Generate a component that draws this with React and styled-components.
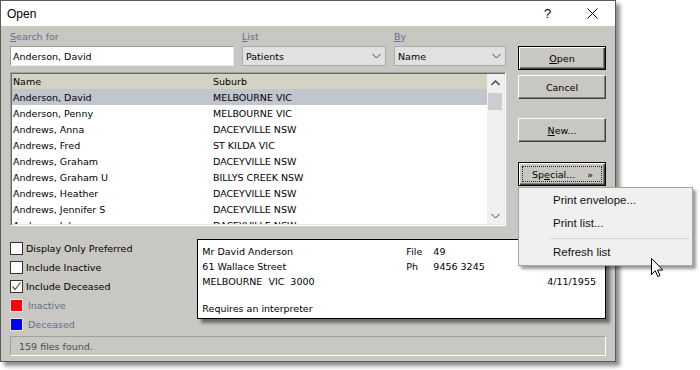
import React from 'react';
import styled, { createGlobalStyle } from 'styled-components';

const GlobalStyle = createGlobalStyle`
  html, body {
    margin: 0;
    padding: 0;
    background: #fff;
  }
  body {
    font-family: "DejaVu Sans", "Liberation Sans", sans-serif;
    font-size: 9.5px;
    color: #000;
  }
`;

const Stage = styled.div`
  position: relative;
  width: 700px;
  height: 370px;
  overflow: hidden;
`;

const Window = styled.div`
  width: 616px;
  height: 362px;
  box-sizing: border-box;
  border: 1px solid #5c5c5c;
  background: #c8c7c1;
  box-shadow: 4px 4px 4px rgba(0, 0, 0, 0.45);
  display: flex;
  flex-direction: column;
`;

const TitleBar = styled.div`
  height: 25px;
  background: #fff;
  display: flex;
  align-items: center;
  padding-left: 6px;
  font-family: "Liberation Sans", sans-serif;
  font-size: 12px;
  color: #000;
`;

const Title = styled.div`
  flex: 1;
`;

const CaptionButton = styled.div`
  width: 45px;
  height: 25px;
  display: flex;
  align-items: center;
  justify-content: center;
  font-family: "Liberation Sans", sans-serif;
  font-size: 13px;
`;

const Body = styled.div`
  flex: 1;
  display: flex;
  flex-direction: column;
  padding: 1px 9px 8px 9px;
`;

const TopSection = styled.div`
  display: flex;
  gap: 12px;
`;

const LeftPane = styled.div`
  width: 496px;
  display: flex;
  flex-direction: column;
`;

const FieldsRow = styled.div`
  display: grid;
  grid-template-columns: 224px 144px 112px;
  column-gap: 8px;
`;

const Field = styled.div`
  display: flex;
  flex-direction: column;
`;

const Label = styled.div`
  height: 19px;
  line-height: 19px;
  color: #66708f;
`;

const TextInput = styled.div`
  height: 20px;
  box-sizing: border-box;
  background: #fff;
  border: 1px solid;
  border-color: #9c9c9c #ececec #ececec #9c9c9c;
  padding-left: 2px;
  display: flex;
  align-items: center;
`;

const Select = styled.div`
  height: 20px;
  box-sizing: border-box;
  background: #e1e1e1;
  border: 1px solid #adadad;
  padding: 0 4px 0 3px;
  display: flex;
  align-items: center;
  justify-content: space-between;
`;

const Chevron = ({ up }) => (
  <svg width="9" height="6" viewBox="0 0 9 6">
    <polyline
      points={up ? '0.5,5 4.5,1 8.5,5' : '0.5,1 4.5,5 8.5,1'}
      fill="none"
      stroke={up ? '#555' : '#444'}
      strokeWidth={up ? 1.6 : 1}
    />
  </svg>
);

const ListBox = styled.div`
  margin-top: 6px;
  height: 154px;
  box-sizing: border-box;
  border: 1px solid;
  border-color: #a0a0a0 #fff #fff #a0a0a0;
  box-shadow: inset 1px 1px #696969, inset -1px -1px #e3e3e3;
  background: #fff;
  display: flex;
  padding: 1px;
`;

const ListArea = styled.div`
  flex: 1;
  overflow: hidden;
`;

const Columns = styled.div`
  display: grid;
  grid-template-columns: 200px 1fr;
  align-items: center;
  height: 16px;
  padding-left: 1px;
  white-space: nowrap;
`;

const HeaderRow = styled(Columns)`
  height: 15px;
  background: #d3d3c4;
`;

const Row = styled(Columns)`
  background: ${(p) => (p.$selected ? '#c1c5ce' : 'transparent')};
`;

const ScrollBar = styled.div`
  width: 17px;
  background: #f0f0f0;
  display: flex;
  flex-direction: column;
  align-items: center;
`;

const ScrollArrow = styled.div`
  height: 17px;
  width: 100%;
  display: flex;
  align-items: center;
  justify-content: center;
`;

const ScrollTrack = styled.div`
  flex: 1;
  width: 100%;
`;

const ScrollThumb = styled.div`
  margin: 2px 2px 0 1px;
  height: 17px;
  background: #cdcdcd;
`;

const RightPane = styled.div`
  width: 89px;
  padding-top: 19px;
  display: flex;
  flex-direction: column;
`;

const Button = styled.div`
  position: relative;
  height: 24px;
  box-sizing: border-box;
  margin-top: ${(p) => p.$gap || 0}px;
  background: #c8c7c1;
  border: 1px solid;
  border-color: ${(p) => (p.$default ? '#000' : '#fff #404040 #404040 #fff')};
  box-shadow: ${(p) =>
    p.$default
      ? 'inset 1px 1px #fff, inset -1px -1px #404040, inset -2px -2px #808080'
      : 'inset -1px -1px #808080'};
  display: flex;
  align-items: center;
  justify-content: center;
  color: #000;
`;

const FocusRect = styled.div`
  flex: 1;
  align-self: stretch;
  margin: 3px;
  border: 1px dotted #222;
  display: flex;
  align-items: center;
  justify-content: space-between;
  padding: 0 8px 0 9px;
`;

const Menu = styled.div`
  position: absolute;
  left: -1px;
  top: 24px;
  width: 175px;
  box-sizing: border-box;
  background: #f0f0f0;
  border: 1px solid #a5a5a5;
  box-shadow: 3px 3px 3px rgba(0, 0, 0, 0.4);
  padding: 1px 0 1px;
  font-family: "Liberation Sans", sans-serif;
  font-size: 11.5px;
  color: #111;
  z-index: 5;
`;

const MenuItem = styled.div`
  height: 23px;
  line-height: 23px;
  padding-left: 34px;
`;

const MenuSeparator = styled.div`
  height: 1px;
  background: #d7d7d7;
  margin: 3px 2px 2px 30px;
`;

const Cursor = styled.svg`
  position: absolute;
  left: 132px;
  top: 70px;
`;

const BottomSection = styled.div`
  display: flex;
  margin-top: 13px;
`;

const OptionList = styled.div`
  width: 188px;
  padding-top: 2px;
  display: flex;
  flex-direction: column;
`;

const Option = styled.div`
  height: 19px;
  display: flex;
  align-items: flex-start;
`;

const CheckBox = styled.div`
  width: 13px;
  height: 13px;
  margin-top: 1px;
  box-sizing: border-box;
  border: 1px solid #333;
  background: #fff;
  display: flex;
  align-items: center;
  justify-content: center;
`;

const Swatch = styled.div`
  width: 13px;
  height: 13px;
  margin-top: 1px;
  box-sizing: border-box;
  border: 1px solid #e8e8e8;
  background: ${(p) => p.$color};
`;

const OptionText = styled.span`
  line-height: 15px;
  margin-left: ${(p) => (p.$legend ? 5 : 3)}px;
  color: ${(p) => (p.$legend ? '#66708f' : '#000')};
`;

const InfoPanel = styled.div`
  width: 410px;
  height: 80px;
  box-sizing: border-box;
  background: #fff;
  border: 1px solid #000;
  box-shadow: 4px 4px 3px rgba(0, 0, 0, 0.45);
  padding: 4px 9px 0 4px;
  display: grid;
  grid-template-columns: 204px 27px 1fr auto;
  grid-template-rows: 15px 15px 15px 12px 15px;
  align-items: center;
  white-space: pre;
`;

const Spacer = styled.div`
  grid-column: 1 / -1;
`;

const FullLine = styled.div`
  grid-column: 1 / -1;
`;

const StatusBar = styled.div`
  margin-top: auto;
  height: 20px;
  box-sizing: border-box;
  border: 1px solid;
  border-color: #a0a0a0 #fff #fff #a0a0a0;
  padding-left: 8px;
  display: flex;
  align-items: center;
  color: #4a4a55;
`;

const patients = [
  ['Anderson, David', 'MELBOURNE VIC'],
  ['Anderson, Penny', 'MELBOURNE VIC'],
  ['Andrews, Anna', 'DACEYVILLE NSW'],
  ['Andrews, Fred', 'ST KILDA VIC'],
  ['Andrews, Graham', 'DACEYVILLE NSW'],
  ['Andrews, Graham U', 'BILLYS CREEK NSW'],
  ['Andrews, Heather', 'DACEYVILLE NSW'],
  ['Andrews, Jennifer S', 'DACEYVILLE NSW'],
  ['Andrews, John', 'DACEYVILLE NSW'],
];

const Check = () => (
  <svg width="11" height="11" viewBox="0 0 11 11">
    <polyline points="1.5,5.5 4,8.5 9.5,1.5" fill="none" stroke="#555" strokeWidth="1.2" />
  </svg>
);

const CloseGlyph = () => (
  <svg width="11" height="11" viewBox="0 0 11 11">
    <path d="M0.5 0.5 L10.5 10.5 M10.5 0.5 L0.5 10.5" stroke="#000" strokeWidth="1" />
  </svg>
);

export default function App() {
  return (
    <Stage>
      <GlobalStyle />
      <Window>
        <TitleBar>
          <Title>Open</Title>
          <CaptionButton>?</CaptionButton>
          <CaptionButton>
            <CloseGlyph />
          </CaptionButton>
        </TitleBar>
        <Body>
          <TopSection>
            <LeftPane>
              <FieldsRow>
                <Field>
                  <Label>
                    <u>S</u>earch for
                  </Label>
                  <TextInput>Anderson, David</TextInput>
                </Field>
                <Field>
                  <Label>
                    <u>L</u>ist
                  </Label>
                  <Select>
                    Patients
                    <Chevron />
                  </Select>
                </Field>
                <Field>
                  <Label>
                    <u>B</u>y
                  </Label>
                  <Select>
                    Name
                    <Chevron />
                  </Select>
                </Field>
              </FieldsRow>
              <ListBox>
                <ListArea>
                  <HeaderRow>
                    <span>Name</span>
                    <span>Suburb</span>
                  </HeaderRow>
                  {patients.map(([name, suburb], i) => (
                    <Row key={name} $selected={i === 0}>
                      <span>{name}</span>
                      <span>{suburb}</span>
                    </Row>
                  ))}
                </ListArea>
                <ScrollBar>
                  <ScrollArrow>
                    <Chevron up />
                  </ScrollArrow>
                  <ScrollTrack>
                    <ScrollThumb />
                  </ScrollTrack>
                  <ScrollArrow>
                    <Chevron />
                  </ScrollArrow>
                </ScrollBar>
              </ListBox>
            </LeftPane>
            <RightPane>
              <Button $default>
                <u>O</u>pen
              </Button>
              <Button $gap={5}>Cancel</Button>
              <Button $gap={19}>
                <u>N</u>ew...
              </Button>
              <Button $gap={20} $default>
                <FocusRect>
                  <span>
                    Sp<u>e</u>cial...
                  </span>
                  <span>»</span>
                </FocusRect>
                <Menu>
                  <MenuItem>Print envelope...</MenuItem>
                  <MenuItem>Print list...</MenuItem>
                  <MenuSeparator />
                  <MenuItem>Refresh list</MenuItem>
                  <Cursor width="13" height="20" viewBox="0 0 13 20">
                    <path
                      d="M0.5 0.5 L0.5 16.5 L4.3 12.8 L6.8 18.6 L9 17.6 L6.6 12 L11.8 12 Z"
                      fill="#fff"
                      stroke="#000"
                      strokeWidth="1"
                      strokeLinejoin="round"
                    />
                  </Cursor>
                </Menu>
              </Button>
            </RightPane>
          </TopSection>
          <BottomSection>
            <OptionList>
              <Option>
                <CheckBox />
                <OptionText>Display Only Preferred</OptionText>
              </Option>
              <Option>
                <CheckBox />
                <OptionText>Include Inactive</OptionText>
              </Option>
              <Option>
                <CheckBox>
                  <Check />
                </CheckBox>
                <OptionText>Include Deceased</OptionText>
              </Option>
              <Option>
                <Swatch $color="#ff0000" />
                <OptionText $legend>Inactive</OptionText>
              </Option>
              <Option>
                <Swatch $color="#0000ff" />
                <OptionText $legend>Deceased</OptionText>
              </Option>
            </OptionList>
            <InfoPanel>
              <span>Mr David Anderson</span>
              <span>File</span>
              <span>49</span>
              <span />
              <span>61 Wallace Street</span>
              <span>Ph</span>
              <span>9456 3245</span>
              <span />
              <span>MELBOURNE  VIC  3000</span>
              <span />
              <span />
              <span>4/11/1955</span>
              <Spacer />
              <FullLine>Requires an interpreter</FullLine>
            </InfoPanel>
          </BottomSection>
          <StatusBar>159 files found.</StatusBar>
        </Body>
      </Window>
    </Stage>
  );
}
